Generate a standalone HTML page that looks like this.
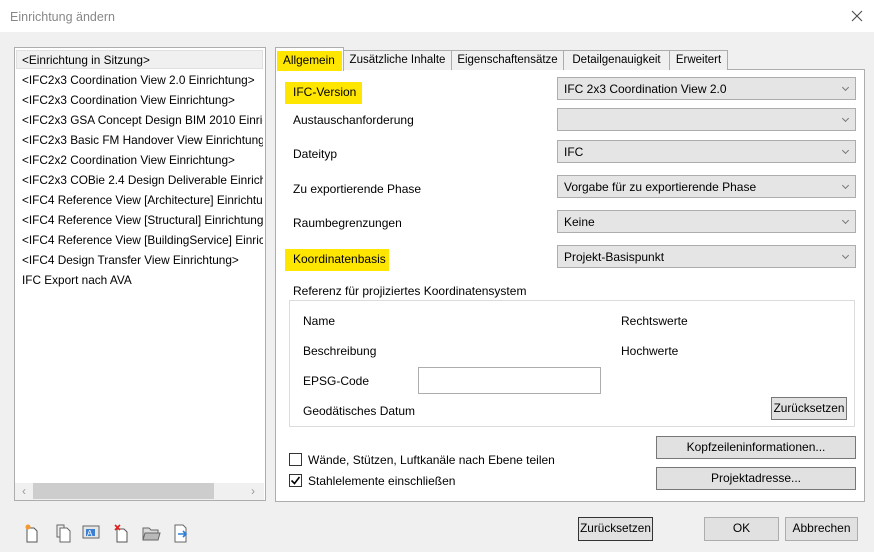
<!DOCTYPE html>
<html><head><meta charset="utf-8"><style>
*{margin:0;padding:0;box-sizing:border-box}
body{width:874px;height:552px;background:#f0f0f0;font-family:"Liberation Sans",sans-serif;font-size:12px;color:#000;position:relative;overflow:hidden}
.a{position:absolute;white-space:nowrap}
.t{position:absolute;white-space:nowrap;line-height:14px}
.dd{position:absolute;left:557px;width:299px;height:23px;background:#e5e5e5;border:1px solid #adadad;padding-left:6px;line-height:23px}
.dd:after{content:"";position:absolute;right:7px;top:7px;width:4px;height:4px;border-right:1px solid #777;border-bottom:1px solid #777;transform:rotate(45deg)}
.btn{position:absolute;background:#e1e1e1;border:1px solid #adadad;text-align:center;line-height:21px}
.tab{position:absolute;top:50px;height:20px;background:#f0f0f0;border:1px solid #acacac;border-bottom:none;text-align:center;line-height:19px;font-size:11.5px}
.hl{position:absolute;background:#ffe600}
.cb{position:absolute;width:13px;height:13px;border:1px solid #333;background:#fff}
</style></head><body>
<div class="a" style="left:0;top:0;width:874px;height:32px;background:#fff"></div>
<div class="t" style="left:10px;top:10px;color:#888;font-size:12.5px">Einrichtung ändern</div>
<svg class="a" style="left:851px;top:10px" width="12" height="12"><path d="M1 1L11 11M11 1L1 11" stroke="#444" stroke-width="1"/></svg>

<div class="a" style="left:14px;top:47px;width:252px;height:454px;background:#fff;border:1px solid #adadad"></div>
<div class="a" style="left:16px;top:50px;width:247px;height:19px;background:#f0f0f0;border:1px solid #e0e0e0"></div>
<div class="a" style="left:15px;top:48px;width:248px;height:434px;overflow:hidden">
<div class="t" style="left:7px;top:2px;line-height:20px;font-size:11.8px">&lt;Einrichtung in Sitzung&gt;<br>&lt;IFC2x3 Coordination View 2.0 Einrichtung&gt;<br>&lt;IFC2x3 Coordination View Einrichtung&gt;<br>&lt;IFC2x3 GSA Concept Design BIM 2010 Einrichtung&gt;<br>&lt;IFC2x3 Basic FM Handover View Einrichtung&gt;<br>&lt;IFC2x2 Coordination View Einrichtung&gt;<br>&lt;IFC2x3 COBie 2.4 Design Deliverable Einrichtung&gt;<br>&lt;IFC4 Reference View [Architecture] Einrichtung&gt;<br>&lt;IFC4 Reference View [Structural] Einrichtung&gt;<br>&lt;IFC4 Reference View [BuildingService] Einrichtung&gt;<br>&lt;IFC4 Design Transfer View Einrichtung&gt;<br>IFC Export nach AVA</div>
</div>
<div class="a" style="left:15px;top:483px;width:249px;height:17px;background:#f0f0f0"></div>
<div class="a" style="left:33px;top:483px;width:181px;height:16px;background:#cdcdcd"></div>
<div class="t" style="left:22px;top:484px;color:#999">‹</div>
<div class="t" style="left:251px;top:484px;color:#999">›</div>

<div class="a" style="left:275px;top:69px;width:590px;height:433px;background:#fff;border:1px solid #adadad"></div>
<div class="tab" style="left:343px;width:109px">Zusätzliche Inhalte</div>
<div class="tab" style="left:451px;width:113px">Eigenschaftensätze</div>
<div class="tab" style="left:563px;width:107px">Detailgenauigkeit</div>
<div class="tab" style="left:669px;width:59px">Erweitert</div>
<div class="a" style="left:275px;top:47px;width:69px;height:24px;background:#fff;border:1px solid #adadad;border-bottom:none"></div>
<div class="hl" style="left:277px;top:51px;width:65px;height:20px"></div>
<div class="t" style="left:283px;top:53px;font-size:11.8px">Allgemein</div>

<div class="hl" style="left:285px;top:82px;width:77px;height:22px"></div>
<div class="t" style="left:293px;top:85px">IFC-Version</div>
<div class="t" style="left:293px;top:113px">Austauschanforderung</div>
<div class="t" style="left:293px;top:147px">Dateityp</div>
<div class="t" style="left:293px;top:182px">Zu exportierende Phase</div>
<div class="t" style="left:293px;top:216px">Raumbegrenzungen</div>
<div class="hl" style="left:285px;top:249px;width:104px;height:22px"></div>
<div class="t" style="left:293px;top:252px">Koordinatenbasis</div>

<div class="dd" style="top:77px">IFC 2x3 Coordination View 2.0</div>
<div class="dd" style="top:108px"></div>
<div class="dd" style="top:140px">IFC</div>
<div class="dd" style="top:175px">Vorgabe für zu exportierende Phase</div>
<div class="dd" style="top:210px">Keine</div>
<div class="dd" style="top:245px">Projekt-Basispunkt</div>

<div class="t" style="left:293px;top:284px">Referenz für projiziertes Koordinatensystem</div>
<div class="a" style="left:289px;top:300px;width:566px;height:127px;border:1px solid #dcdcdc"></div>
<div class="t" style="left:303px;top:314px">Name</div>
<div class="t" style="left:621px;top:314px">Rechtswerte</div>
<div class="t" style="left:303px;top:344px">Beschreibung</div>
<div class="t" style="left:621px;top:344px">Hochwerte</div>
<div class="t" style="left:303px;top:374px">EPSG-Code</div>
<div class="a" style="left:418px;top:367px;width:183px;height:27px;border:1px solid #adadad;background:#fff"></div>
<div class="t" style="left:303px;top:404px">Geodätisches Datum</div>
<div class="btn" style="left:771px;top:397px;width:76px;height:23px;border-color:#777;font-size:11.8px">Zurücksetzen</div>

<div class="btn" style="left:656px;top:436px;width:200px;height:23px;border-color:#777">Kopfzeileninformationen...</div>
<div class="btn" style="left:656px;top:467px;width:200px;height:23px;border-color:#777">Projektadresse...</div>
<div class="cb" style="left:289px;top:453px"></div>
<div class="t" style="left:308px;top:453px">Wände, Stützen, Luftkanäle nach Ebene teilen</div>
<div class="cb" style="left:289px;top:474px"></div>
<svg class="a" style="left:290px;top:475px" width="11" height="11"><path d="M1.5 5.5L4.5 8.5L9.5 2" stroke="#000" stroke-width="1.6" fill="none"/></svg>
<div class="t" style="left:308px;top:474px">Stahlelemente einschließen</div>

<div class="btn" style="left:578px;top:517px;width:75px;height:24px;border-color:#333;font-size:11.8px">Zurücksetzen</div>
<div class="btn" style="left:704px;top:517px;width:75px;height:24px">OK</div>
<div class="btn" style="left:785px;top:517px;width:73px;height:24px">Abbrechen</div>

<svg class="a" style="left:24px;top:524px" width="180" height="20">
<path d="M3 4h7l3 3v11H3z" fill="#fff" stroke="#555"/><circle cx="4" cy="3" r="2.5" fill="#f29a2e"/>
<path d="M33 1h7v12h-7z" fill="#eee" stroke="#666"/><path d="M36 4h7l3 3v11h-10z" fill="#fff" stroke="#666"/>
<path d="M59 2h16v12h-16z" fill="#e6e6e6" stroke="#666"/><path d="M62 5h9v7h-9z" fill="#3b7fd1"/><text x="63" y="12" font-size="8" fill="#fff" font-family="Liberation Sans">A</text>
<path d="M93 5h7l3 3v10h-10z" fill="#fff" stroke="#555"/><path d="M91 1l5 5M96 1l-5 5" stroke="#e02020" stroke-width="1.6"/>
<path d="M119 4h6l2 2h7v10h-15z" fill="#d9d9d9" stroke="#666"/><path d="M121 9h15l-2 7h-15z" fill="#b9b9b9" stroke="#666"/>
<path d="M151 1h8l3 3v14h-11z" fill="#fff" stroke="#666"/><path d="M154 10h7M159 7l3 3-3 3" stroke="#2b7fd6" stroke-width="1.6" fill="none"/>
</svg>
</body></html>
